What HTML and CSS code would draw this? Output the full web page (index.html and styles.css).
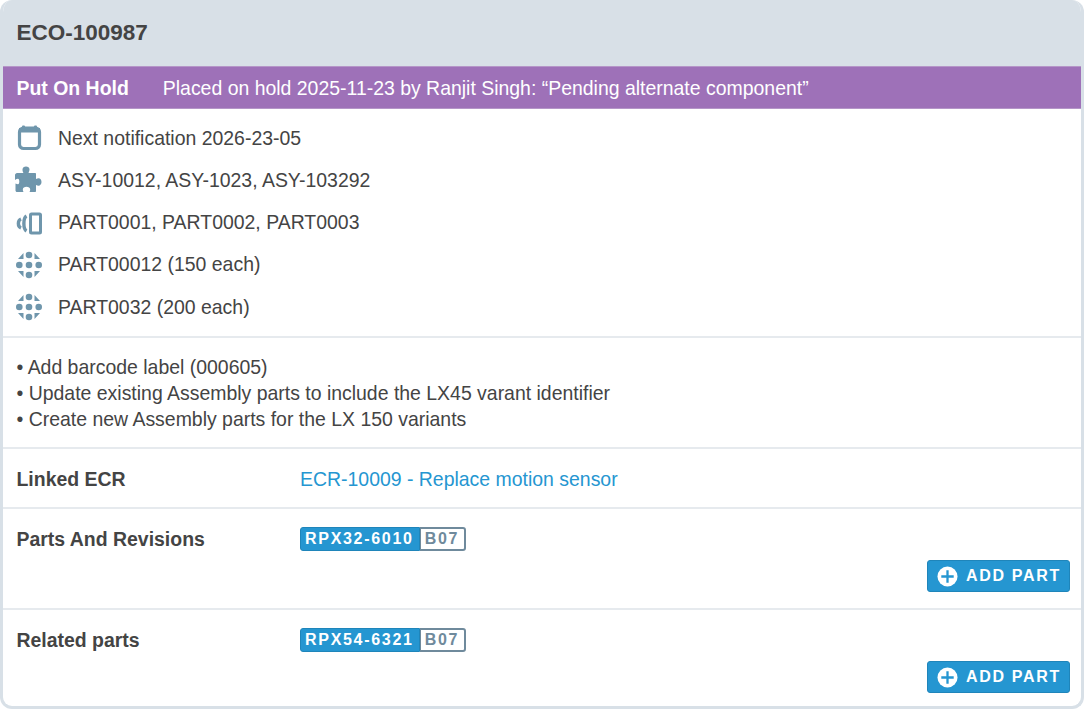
FILE: index.html
```html
<!DOCTYPE html>
<html lang="en">
<head>
    <meta charset="UTF-8">
    <title>ECO-100987</title>
    <link rel="stylesheet" href="styles.css">
</head>
<body>
    <div class="card">
        <h1 class="card-title">ECO-100987</h1>
        <div class="status">
            <strong class="status-name">Put On Hold</strong>
            <span>Placed on hold 2025-11-23 by Ranjit Singh: “Pending alternate component”</span>
        </div>
        <ul class="facts">
            <li>
                <svg class="icon" viewBox="0 0 28 28"><rect x="5.500" y="4" width="20" height="20.500" rx="4" fill="none" stroke="#6f96ac" stroke-width="3.200"/><path d="M5 4h21v4.500H5z" fill="#6f96ac"/><rect x="8" y="1.500" width="3" height="3" rx="1" fill="#6f96ac"/><rect x="20" y="1.500" width="3" height="3" rx="1" fill="#6f96ac"/></svg>
                Next notification 2026-23-05
            </li>
            <li>
                <svg class="icon" viewBox="0 0 28 28"><path d="M3 7H9.500C8.500 5.500 8.500 4.500 8.500 3.500C8.500 1.500 10 .5 12 .5S15.500 1.500 15.500 3.500C15.500 4.500 15 5.500 14.500 7H21C21.600 7 22 7.400 22 8V13C23 12.500 24 12.300 24.500 12.300C26.300 12.300 27.500 14 27.500 16S26.300 19.700 24.500 19.700C24 19.700 23 19.500 22 19V25C22 25.600 21.600 26 21 26H15.500C16 25 16.200 24.500 16.200 23.500C16.200 21.700 14.500 20.800 12.500 20.800S8.800 21.700 8.800 23.500C8.800 24.500 9 25 9.500 26H3C2.200 26 1.500 25.300 1.500 24.500V17.500C2.500 18 3.200 18.300 4 18.300C4.800 18.300 5.300 17 5.300 15.500S4.800 12.800 4 12.800C3 12.800 2 13.300 1 14V9C1 8 2 7 3 7Z" fill="#6f96ac"/></svg>
                ASY-10012, ASY-1023, ASY-103292
            </li>
            <li>
                <svg class="icon" viewBox="0 0 28 28"><rect x="16.500" y="5" width="10" height="19" rx="1" fill="none" stroke="#6f96ac" stroke-width="3"/><path d="M12.500 7C9 9 9 20 12.500 22" fill="none" stroke="#6f96ac" stroke-width="3.400"/><path d="M7 10C3.500 11.500 3.500 17.500 7 19" fill="none" stroke="#6f96ac" stroke-width="3.400"/></svg>
                PART0001, PART0002, PART0003
            </li>
            <li>
                <svg class="icon" viewBox="0 0 28 28"><use href="#dots"/></svg>
                PART00012 (150 each)
            </li>
            <li>
                <svg class="icon" viewBox="0 0 28 28">
                    <g id="dots" fill="#6f96ac">
                        <circle cx="15" cy="4" r="3.300"/><circle cx="5.300" cy="14" r="3.300"/><circle cx="15" cy="14" r="3.300"/><circle cx="24.700" cy="14" r="3.300"/><circle cx="15" cy="24" r="3.300"/>
                        <path d="M9.500 2v6H4zM20.500 2v6H26zM4 20h5.500v6zM26 20h-5.500v6z"/>
                    </g>
                </svg>
                PART0032 (200 each)
            </li>
        </ul>
        <div class="notes">
            • Add barcode label (000605)<br>
            • Update existing Assembly parts to include the LX45 varant identifier<br>
            • Create new Assembly parts for the LX 150 variants
        </div>
        <div class="row row-link">
            <div class="row-label">Linked ECR</div>
            <a class="row-link-text" href="#">ECR-10009 - Replace motion sensor</a>
        </div>
        <div class="row">
            <div class="row-label">Parts And Revisions</div>
            <div class="row-body">
                <div class="tag"><span class="tag-part">RPX32-6010</span><span class="tag-rev">B07</span></div>
                <button class="add-btn" type="button">
                    <svg class="add-icon" viewBox="0 0 22 22"><circle cx="11" cy="11" r="10.500" fill="#fff"/><path d="M9.800 4.500h2.400v5.300h5.300v2.400h-5.300v5.300H9.800v-5.300H4.500V9.800h5.300z" fill="#2596d1"/></svg>
                    ADD PART
                </button>
            </div>
        </div>
        <div class="row row-last">
            <div class="row-label">Related parts</div>
            <div class="row-body">
                <div class="tag"><span class="tag-part">RPX54-6321</span><span class="tag-rev">B07</span></div>
                <button class="add-btn" type="button">
                    <svg class="add-icon" viewBox="0 0 22 22"><circle cx="11" cy="11" r="10.500" fill="#fff"/><path d="M9.800 4.500h2.400v5.300h5.300v2.400h-5.300v5.300H9.800v-5.300H4.500V9.800h5.300z" fill="#2596d1"/></svg>
                    ADD PART
                </button>
            </div>
        </div>
    </div>
</body>
</html>
```

FILE: styles.css
```css
* {
    box-sizing: border-box;
}
body {
    margin: 0;
    background: #fff;
    font-family: "Liberation Sans", Arial, sans-serif;
    font-size: 19.44px;
    color: #444;
}
.card {
    width: 1084px;
    height: 709px;
    border: 3px solid #d8e0e7;
    border-top: 0;
    border-radius: 12px;
    overflow: hidden;
}
.card-title {
    margin: 0 -3px;
    height: 66px;
    padding: 0 16.5px;
    background: #d8e0e7;
    font-size: 22.5px;
    line-height: 66px;
}
.status {
    display: flex;
    align-items: center;
    gap: 34px;
    height: 43px;
    padding: 1px 13.5px 0;
    background: #9e71b8;
    border-top: 1px solid #b596c8;
    border-bottom: 1px solid #b596c8;
    color: #fff;
}
.status-name {
    font-weight: bold;
}
.facts {
    margin: 0;
    padding: 8px 0 8px;
    list-style: none;
    border-bottom: 2px solid #e6eaee;
}
.facts li {
    display: flex;
    align-items: center;
    height: 42.25px;
    padding-left: 11px;
}
.icon {
    flex: none;
    width: 28px;
    height: 28px;
    margin-right: 16px;
}
.notes {
    padding: 16px 13.5px 15px;
    line-height: 26px;
    border-bottom: 2px solid #e6eaee;
}
.row {
    display: flex;
    padding: 17px 11px 16px 13.5px;
    border-bottom: 2px solid #e6eaee;
}
.row-link {
    height: 60px;
}
.row-last {
    border-bottom: 0;
}
.row-label {
    flex: none;
    width: 283.5px;
    font-weight: bold;
    line-height: 26px;
}
.row-link-text {
    color: #2596d1;
    text-decoration: none;
    line-height: 26px;
}
.row-body {
    flex: 1;
    display: flex;
    flex-direction: column;
    align-items: flex-start;
}
.tag {
    display: flex;
    height: 24px;
    margin-top: 1px;
    font-size: 16px;
    font-weight: bold;
    letter-spacing: 1.7px;
    line-height: 21px;
}
.tag-part {
    padding: 0 5px 0 4px;
    background: #2596d1;
    border: 1px solid #1f85ba;
    border-radius: 3px 0 0 3px;
    color: #fff;
}
.tag-rev {
    padding: 0 5px 0 4px;
    background: #fff;
    border: 2px solid #6f8a9c;
    border-left-width: 1px;
    border-radius: 0 3px 3px 0;
    color: #6f8a9c;
    line-height: 20px;
}
.add-btn {
    display: flex;
    align-items: center;
    gap: 8px;
    align-self: flex-end;
    height: 32px;
    margin-top: 9px;
    padding: 0 8px 0 9px;
    background: #2596d1;
    border: 1px solid #1f85ba;
    border-radius: 3px;
    color: #fff;
    font-family: inherit;
    font-size: 16px;
    font-weight: bold;
    letter-spacing: 1.7px;
}
.add-icon {
    width: 21px;
    height: 21px;
}
```
